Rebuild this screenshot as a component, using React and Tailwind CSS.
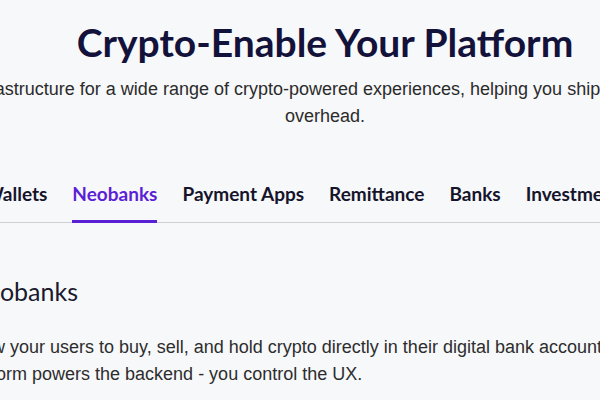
const TABS = ['Wallets', 'Neobanks', 'Payment Apps', 'Remittance', 'Banks', 'Investments', 'Exchanges']

export default function App() {
  const active = 'Neobanks'

  return (
    <div className="w-[600px] h-[400px] overflow-hidden bg-[#f7f8fa]">
      <div className="w-[1000px] ml-[-175px] pt-[20px]">
        <h1 className="text-center font-['Lato',sans-serif] font-bold text-[39px] leading-[44px] text-[#13123a]">
          Crypto-Enable Your Platform
        </h1>
        <p className="mt-[12px] mx-auto max-w-[880px] text-center [font-family:'Liberation_Sans',Arial,sans-serif] text-[18px] leading-[27px] text-[#2b2b2b]">
          Modular infrastructure for a wide range of crypto-powered experiences, helping you ship faster with far less overhead.
        </p>

        <div className="mt-[52px] border-b border-[#cfcfd4]">
          <div className="flex gap-[25px] pl-[159px]">
            {TABS.map(t => (
              <button
                key={t}
                className={`pb-[14px] border-b-[3px] mb-[-1px] font-['Lato',sans-serif] font-bold text-[19px] leading-[24px] ${
                  t === active ? 'border-[#5b1fd6] text-[#5b1fd6]' : 'border-transparent text-[#15142b]'
                }`}
              >
                {t}
              </button>
            ))}
          </div>
        </div>

        <div className="pl-[143px] pt-[52px]">
          <h2 className="font-['Lato',sans-serif] font-normal text-[25px] leading-[32px] text-[#1a1a2e]">Neobanks</h2>
          <p className="mt-[27px] ml-[-6px] w-[700px] [font-family:'Liberation_Sans',Arial,sans-serif] text-[18px] leading-[27px] text-[#2d2d2d]">
            Allow your users to buy, sell, and hold crypto directly in their digital bank accounts. Our platform powers the backend - you control the UX.
          </p>
        </div>
      </div>
    </div>
  )
}
